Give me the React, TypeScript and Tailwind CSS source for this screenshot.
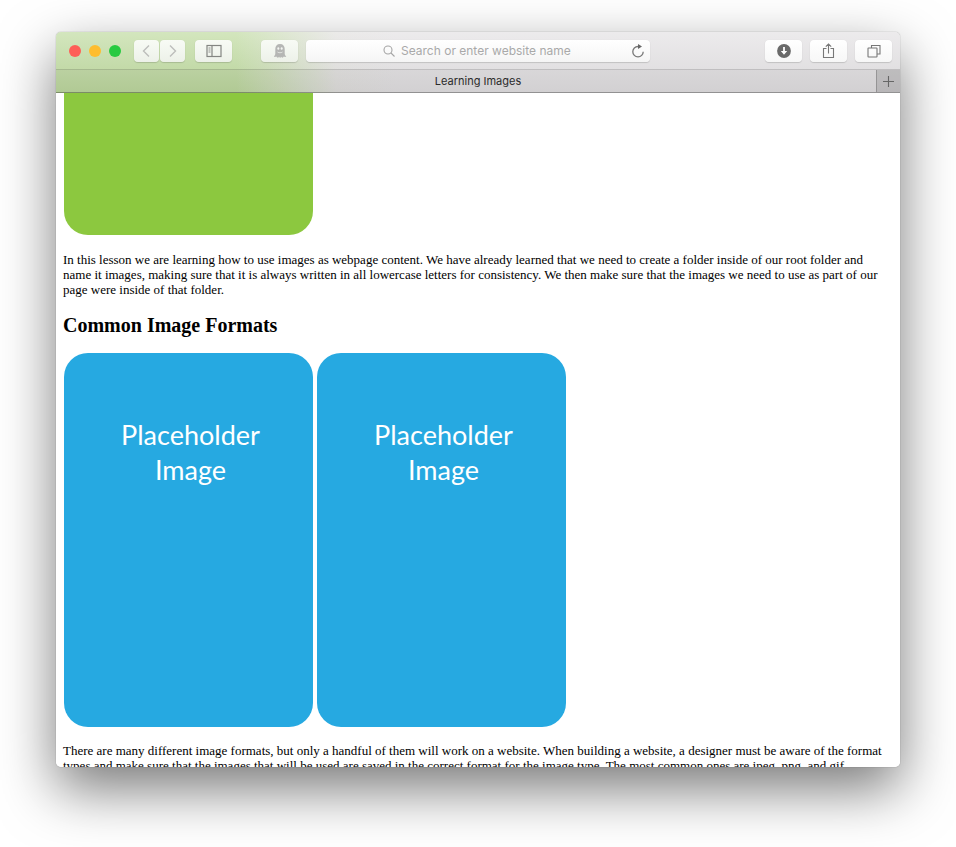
import type { ReactNode } from "react";

const buttonLook =
  "flex h-[22px] shrink-0 items-center justify-center rounded-[4px] bg-linear-to-b from-white to-[#f7f7f7] shadow-[0_1px_1px_rgba(0,0,0,0.14),0_0_1px_rgba(0,0,0,0.1)]";

const tintedLook =
  "flex h-[22px] shrink-0 items-center justify-center rounded-[4px] bg-linear-to-b from-[#f8fbf5] to-[#edf1e9] shadow-[0_1px_1px_rgba(0,0,0,0.14),0_0_1px_rgba(0,0,0,0.1)]";

function ToolButton({
  label,
  width,
  tinted = false,
  children,
}: {
  label: string;
  width: string;
  tinted?: boolean;
  children: ReactNode;
}) {
  return (
    <button type="button" aria-label={label} className={`${tinted ? tintedLook : buttonLook} ${width}`}>
      {children}
    </button>
  );
}

function Chevron({ d }: { d: string }) {
  return (
    <svg width="9" height="14" viewBox="0 0 9 14" fill="none" stroke="#bcbebb" strokeWidth="1.4">
      <path d={d} />
    </svg>
  );
}

function SidebarIcon() {
  return (
    <svg width="16" height="14" viewBox="0 0 16 14" fill="none" stroke="#848682">
      <rect x="1" y="1.500" width="14" height="11" strokeWidth="1.200" />
      <path d="M6 1.500v11" strokeWidth="1.200" />
      <path d="M2.500 4h2M2.500 6h2M2.500 8h2" strokeWidth="0.900" />
    </svg>
  );
}

function GhostIcon() {
  return (
    <svg width="14" height="16" viewBox="0 0 14 16">
      <path
        d="M7 1C3.900 1 2.300 3 2.300 6v4.400c0 1.400-.8 2.200-1.500 3.200.9.500 1.700.300 2.500-.1.300.700.900 1.100 1.600 1.300.600-.200 1-.500 1.300-1 .300.600.600 1 .900 1.200.400-.200.700-.600.900-1.200.300.500.700.800 1.300 1 .700-.200 1.200-.600 1.500-1.300.800.400 1.600.600 2.500.1-.800-1-1.600-1.800-1.600-3.200V6C11.700 3 10.100 1 7 1z"
        fill="#b5b6b4"
      />
      <ellipse cx="5.300" cy="5.500" rx="1" ry="1.300" fill="#f4f6f2" />
      <ellipse cx="8.700" cy="5.500" rx="1" ry="1.300" fill="#f4f6f2" />
      <path d="M4.200 8.600c1.600 1.200 4 1.200 5.600 0-.6 2.100-5 2.100-5.600 0z" fill="#f4f6f2" />
    </svg>
  );
}

function DownloadIcon() {
  return (
    <svg width="14" height="14" viewBox="0 0 14 14">
      <circle cx="7" cy="7" r="6.900" fill="#6a6a6a" />
      <path d="M6.100 3h1.800v4h2.300L7 10.800 3.800 7h2.300z" fill="#fff" />
    </svg>
  );
}

function ShareIcon() {
  return (
    <svg width="13" height="16" viewBox="0 0 13 16" fill="none" stroke="#777" strokeWidth="1.100">
      <path d="M4.500 5.500H1.500v9h10v-9h-3M6.500 10.500V1M3.800 3.700 6.500 1l2.700 2.700" />
    </svg>
  );
}

function TabsIcon() {
  return (
    <svg width="14" height="14" viewBox="0 0 14 14" fill="none" stroke="#777" strokeWidth="1.100">
      <rect x="1" y="4" width="9" height="9" rx="0.500" />
      <path d="M4.500 4V1.500h8.500V10H10" />
    </svg>
  );
}

function PlaceholderImage() {
  return (
    <div
      role="img"
      aria-label="Placeholder Image"
      className="h-[374px] w-[249px] shrink-0 rounded-[24px] bg-[#26a9e1] pt-16 pl-1 text-center font-['Lato','Liberation_Sans',sans-serif] text-[27px] leading-[35px] text-white"
    >
      Placeholder
      <br />
      Image
    </div>
  );
}

export default function App() {
  return (
    <div className="flex h-screen flex-col overflow-hidden bg-white px-14 pt-8 pb-20">
      <div className="flex min-h-0 flex-1 flex-col rounded-[5px] shadow-[0_0_1px_rgba(0,0,0,0.5),0_22px_56px_rgba(0,0,0,0.53)]">
        <header className="shrink-0 rounded-t-[5px] bg-[linear-gradient(to_bottom,rgba(255,255,255,0.3),rgba(0,0,0,0.04)),linear-gradient(to_right,#c0dba1_0,#c0dba1_180px,#e2e1df_280px,#e4e2e4_340px)]">
          <div className="flex h-[38px] items-center border-b border-black/15 pr-2 pl-[13px]">
            <div className="flex gap-2">
              <button type="button" aria-label="Close" className="size-3 rounded-full bg-[#fe5f57]" />
              <button type="button" aria-label="Minimize" className="size-3 rounded-full bg-[#febd2e]" />
              <button type="button" aria-label="Zoom" className="size-3 rounded-full bg-[#28ca41]" />
            </div>
            <div className="ml-[13px] flex gap-px">
              <ToolButton label="Back" width="w-[25px]" tinted>
                <Chevron d="M7 1.500 1.500 7 7 12.500" />
              </ToolButton>
              <ToolButton label="Forward" width="w-[25px]" tinted>
                <Chevron d="M2 1.500 7.500 7 2 12.500" />
              </ToolButton>
            </div>
            <div className="ml-[10px]">
              <ToolButton label="Show sidebar" width="w-[37px]" tinted>
                <SidebarIcon />
              </ToolButton>
            </div>
            <div className="ml-[29px]">
              <ToolButton label="Privacy extension" width="w-[37px]" tinted>
                <GhostIcon />
              </ToolButton>
            </div>
            <div className="mr-[115px] ml-2 flex h-[22px] min-w-0 flex-1 items-center rounded-[4px] bg-linear-to-b from-white to-[#f5f5f5] pr-1 shadow-[0_1px_1px_rgba(0,0,0,0.14),0_0_1px_rgba(0,0,0,0.1)]">
              <label className="flex min-w-0 flex-1 items-center justify-center gap-[6px] pt-px pl-5">
                <svg width="12" height="12" viewBox="0 0 12 12" fill="none" stroke="#a5a5a5" strokeWidth="1.100">
                  <circle cx="5" cy="5" r="4" />
                  <path d="m8 8 3.500 3.500" />
                </svg>
                <input
                  type="text"
                  aria-label="Search or enter website name"
                  placeholder="Search or enter website name"
                  className="w-[172px] bg-transparent font-['Inter','Liberation_Sans',sans-serif] text-[12px] leading-4 outline-none placeholder:text-[#a9a9a9]"
                />
              </label>
              <button type="button" aria-label="Reload" className="flex size-4 shrink-0 items-center justify-center">
                <svg width="14" height="14" viewBox="0 0 14 14" fill="none">
                  <path d="M8 2.500H7a5.200 5.200 0 1 0 5.200 5.200" stroke="#777" strokeWidth="1.300" />
                  <path d="M7 0v5l4-2.500z" fill="#666" />
                </svg>
              </button>
            </div>
            <div className="flex gap-2">
              <ToolButton label="Downloads" width="w-[37px]">
                <DownloadIcon />
              </ToolButton>
              <ToolButton label="Share" width="w-[37px]">
                <ShareIcon />
              </ToolButton>
              <ToolButton label="Show all tabs" width="w-[37px]">
                <TabsIcon />
              </ToolButton>
            </div>
          </div>
          <div className="flex h-[23px] border-b border-black/30 bg-black/4 font-['Inter','Liberation_Sans',sans-serif] text-[11px] leading-[22px] text-[#2b2b2b]">
            <div className="min-w-0 flex-1 pl-6 text-center">Learning Images</div>
            <button
              type="button"
              aria-label="New tab"
              className="flex w-6 shrink-0 items-center justify-center border-l border-black/20 bg-black/12"
            >
              <svg width="11" height="11" viewBox="0 0 11 11" stroke="#666" strokeWidth="1.100">
                <path d="M5.500 0v11M0 5.500h11" />
              </svg>
            </button>
          </div>
        </header>
        <main className="min-h-0 flex-1 overflow-hidden rounded-b-[5px] bg-white px-[7px] font-['Liberation_Serif',serif] text-[13px] leading-[15px] text-black">
          <div role="img" aria-label="Green placeholder" className="ml-px h-[142px] w-[249px] rounded-b-[24px] bg-[#8cc83f]" />
          <p className="mt-[17px]">
            In this lesson we are learning how to use images as webpage content. We have already learned that we need
            to create a folder inside of our root folder and name it images, making sure that it is always written in
            all lowercase letters for consistency. We then make sure that the images we need to use as part of our page
            were inside of that folder.
          </p>
          <h2 className="mt-4 text-[20px] leading-6 font-bold">Common Image Formats</h2>
          <div className="mt-4 ml-px flex gap-1">
            <PlaceholderImage />
            <PlaceholderImage />
          </div>
          <p className="mt-4">
            There are many different image formats, but only a handful of them will work on a website. When building a
            website, a designer must be aware of the format types and make sure that the images that will be used are
            saved in the correct format for the image type. The most common ones are jpeg, png, and gif.
          </p>
        </main>
      </div>
    </div>
  );
}
